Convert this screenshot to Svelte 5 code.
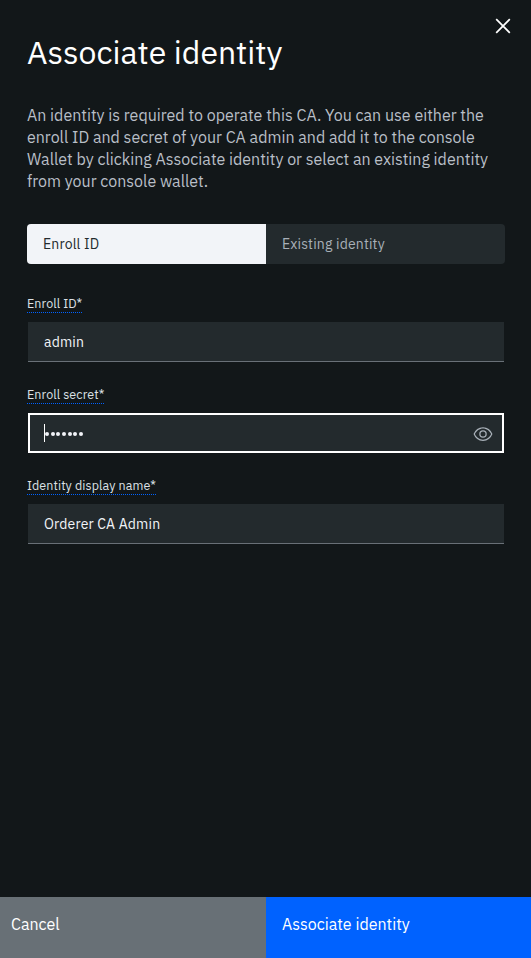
<script>
  let enrollId = $state('admin');
  let displayName = $state('Orderer CA Admin');
  const secretLength = 7;
  const description = [
    'An identity is required to operate this CA. You can use either the',
    'enroll ID and secret of your CA admin and add it to the console',
    'Wallet by clicking Associate identity or select an existing identity',
    'from your console wallet.'
  ];
</script>

<main class="panel">
  <section class="content">
    <button class="close" aria-label="Close">
      <svg width="16" height="16" viewBox="0 0 16 16"><path d="M1.2 1.2 14.8 14.8M14.8 1.2 1.2 14.8" /></svg>
    </button>
    <h1>Associate identity</h1>
    <p class="description">
      {#each description as line}
        <span class="line">{line}</span>
      {/each}
    </p>

    <div class="switcher">
      <button class="selected">Enroll ID</button>
      <button class="existing">Existing identity</button>
    </div>

    <div class="field">
      <span class="label">Enroll ID*</span>
      <div class="box"><span class="value">{enrollId}</span></div>
    </div>
    <div class="field">
      <span class="label">Enroll secret*</span>
      <div class="box focused">
        <i class="caret"></i>
        <span class="dots">{#each Array(secretLength) as _}<i></i>{/each}</span>
        <svg class="eye" width="20" height="20" viewBox="0 0 32 32"><path d="M30.94 15.66A16.69 16.69 0 0 0 16 5 16.69 16.69 0 0 0 1.06 15.66a1 1 0 0 0 0 .68A16.69 16.69 0 0 0 16 27a16.69 16.69 0 0 0 14.94-10.66 1 1 0 0 0 0-.68ZM16 25c-5.3 0-10.9-3.93-12.93-9C5.1 10.93 10.7 7 16 7s10.9 3.93 12.93 9C26.9 21.07 21.3 25 16 25Z" /><path d="M16 10a6 6 0 1 0 6 6 6 6 0 0 0-6-6Zm0 10a4 4 0 1 1 4-4 4 4 0 0 1-4 4Z" /></svg>
      </div>
    </div>
    <div class="field">
      <span class="label">Identity display name*</span>
      <div class="box"><span class="value">{displayName}</span></div>
    </div>
  </section>

  <footer>
    <button class="cancel">Cancel</button>
    <button class="submit">Associate identity</button>
  </footer>
</main>

<style>
  :global(body) { background: #121719; }
  .panel {
    height: 958px;
    display: flex;
    flex-direction: column;
    background: #121719;
    color: #f2f4f8;
    font-family: 'IBM Plex Sans', Roboto, 'Liberation Sans', sans-serif;
    overflow: hidden;
  }
  .panel * { box-sizing: border-box; }
  button { border: 0; margin: 0; padding: 0; font: inherit; color: inherit; text-align: left; background: none; }
  .content { flex: 1; position: relative; padding: 32px 26px 0 27px; }
  .close { position: absolute; top: 18px; right: 20px; width: 16px; height: 16px; }
  .close svg { display: block; stroke: #fff; stroke-width: 1.7; fill: none; }
  h1 { margin: 0; font-size: 32px; line-height: 40px; font-weight: 400; color: #fff; white-space: nowrap; }
  .description { margin: 32px 0 0; font-size: 16px; line-height: 22px; color: #b9bfc7; }
  .line { display: block; height: 22px; white-space: nowrap; }
  .switcher { display: flex; height: 40px; margin-top: 32px; border-radius: 4px; overflow: hidden; font-size: 14px; background: #232a2d; }
  .switcher button { flex: 1; padding-left: 16px; letter-spacing: .16px; white-space: nowrap; }
  .switcher .selected { background: #f2f4f8; color: #232a2d; }
  .switcher .existing { color: #a8b0b8; }
  .field { display: flex; flex-direction: column; align-items: flex-start; height: 91px; }
  .switcher + .field { margin-top: 32px; }
  .label { height: 17px; border-bottom: 1px dotted #0062ff; font-size: 12.5px; line-height: 15px; letter-spacing: .08px; color: #dde1e6; white-space: nowrap; }
  .box { align-self: stretch; display: flex; align-items: center; height: 40px; margin: 9px 1px 0; padding: 0 16px; background: #232a2d; border-bottom: 1px solid #697077; }
  .value { font-size: 14px; letter-spacing: .16px; white-space: nowrap; }
  .focused { border: 2px solid #fff; padding: 1px 9px 0 14px; }
  .caret { width: 1px; height: 18px; margin-bottom: 1px; background: #fff; }
  .dots { display: flex; gap: 1.7px; }
  .dots i { width: 4px; height: 4px; border-radius: 50%; background: #f2f4f8; }
  .eye { margin-left: auto; fill: #a8b0b8; }
  footer { display: flex; height: 61px; font-size: 16px; line-height: 22px; color: #fff; }
  footer button { padding: 0 0 7px 16px; }
  footer .cancel { width: 266px; padding-left: 11px; background: #687076; }
  .submit { flex: 1; background: #0062ff; }
</style>
